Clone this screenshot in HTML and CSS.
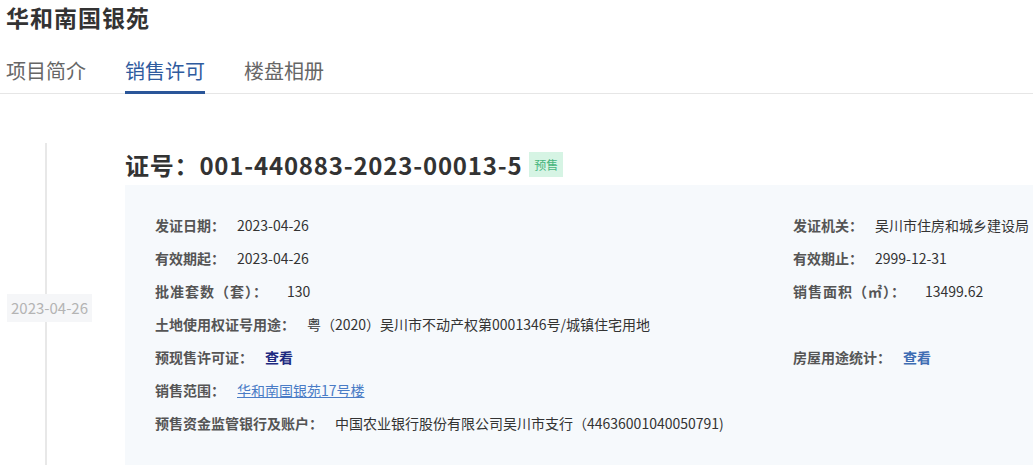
FILE: index.html
```html
<!DOCTYPE html>
<html lang="zh-CN">
<head>
    <meta charset="UTF-8">
    <meta name="viewport" content="width=device-width, initial-scale=1.0">
    <title>华和南国银苑 - 销售许可</title>
    <link rel="stylesheet" href="styles.css">
</head>
<body>
    <!-- 楼盘名称 -->
    <h1 class="project-title">华和南国银苑</h1>

    <!-- 标签页 -->
    <div class="tabs">
        <a class="tab">项目简介</a>
        <a class="tab active">销售许可</a>
        <a class="tab">楼盘相册</a>
    </div>

    <!-- 许可证时间线 -->
    <div class="timeline">
        <div class="axis">
            <span class="axis-date">2023-04-26</span>
        </div>

        <div class="license">
            <div class="license-head">
                <h2>证号：001-440883-2023-00013-5</h2>
                <span class="tag">预售</span>
            </div>

            <div class="license-body">
                <div class="row"><span class="label">发证日期：</span><span class="value">2023-04-26</span></div>
                <div class="row"><span class="label">发证机关：</span><span class="value">吴川市住房和城乡建设局</span></div>

                <div class="row"><span class="label">有效期起：</span><span class="value">2023-04-26</span></div>
                <div class="row"><span class="label">有效期止：</span><span class="value">2999-12-31</span></div>

                <div class="row"><span class="label paren">批准套数（套）：</span><span class="value">130</span></div>
                <div class="row"><span class="label paren">销售面积（㎡）：</span><span class="value">13499.62</span></div>

                <div class="row"><span class="label">土地使用权证号用途：</span><span class="value">粤（2020）吴川市不动产权第0001346号/城镇住宅用地</span></div>
                <div class="row"></div>

                <div class="row"><span class="label">预现售许可证：</span><a class="view view-dark">查看</a></div>
                <div class="row"><span class="label">房屋用途统计：</span><a class="view">查看</a></div>

                <div class="row wide"><span class="label">销售范围：</span><a class="range-link">华和南国银苑17号楼</a></div>
                <div class="row wide"><span class="label">预售资金监管银行及账户：</span><span class="value">中国农业银行股份有限公司吴川市支行（44636001040050791)</span></div>
            </div>
        </div>
    </div>
</body>
</html>
```

FILE: styles.css
```css
html {
    overflow: hidden;
}

body {
    margin: 0;
    font-family: "Noto Sans CJK SC", "Noto Sans", sans-serif;
    color: #333;
    background-color: #fff;
}

.project-title {
    margin: 0;
    padding-left: 6px;
    font-size: 23px;
    line-height: 34px;
    letter-spacing: 1px;
    font-weight: bold;
    color: #333;
}

.tabs {
    display: flex;
    gap: 39px;
    margin-top: 23px;
    padding-left: 6px;
    border-bottom: 1px solid #e6e6e6;
}

.tab {
    font-size: 20px;
    line-height: 28px;
    padding-bottom: 6px;
    border-bottom: 3px solid transparent;
    margin-bottom: -1px;
    color: #666;
    cursor: pointer;
}

.tab.active {
    color: #2f5b9e;
    border-bottom-color: #2a5699;
}

.timeline {
    display: flex;
    padding-top: 49px;
}

.axis {
    position: relative;
    flex: none;
    width: 78px;
    margin-left: 45px;
    border-left: 2px solid #e8e8e8;
}

.axis-date {
    position: absolute;
    left: -40px;
    top: 151px;
    padding: 0 4px 0 4px;
    font-size: 15px;
    line-height: 28px;
    color: #b4b4b4;
    background-color: #f5f6f8;
}

.license {
    flex: 1;
}

.license-head {
    display: flex;
    align-items: center;
    gap: 7px;
    height: 42px;
}

.license-head h2 {
    margin: 0;
    font-size: 24px;
    letter-spacing: 0.8px;
    font-weight: bold;
    color: #333;
}

.tag {
    font-size: 12px;
    line-height: 25px;
    padding: 0 5px;
    color: #45b47c;
    background-color: #d6f4e4;
}

.license-body {
    display: grid;
    grid-template-columns: 638px 1fr;
    padding: 23px 0 30px 30px;
    background-color: #f6f9fc;
    white-space: nowrap;
}

.row {
    height: 33px;
    display: flex;
    align-items: center;
    font-size: 14px;
}

.row.wide {
    grid-column: 1 / 3;
}

.label {
    margin-right: 12px;
    font-weight: bold;
    color: #555;
}

.label.paren {
    letter-spacing: 1px;
    margin-right: 19px;
}

.value {
    color: #333;
}

.view {
    font-weight: bold;
    color: #3e6db3;
    cursor: pointer;
}

.view-dark {
    color: #1d2a80;
}

.range-link {
    color: #4a7cc6;
    text-decoration: underline;
    cursor: pointer;
}
```
